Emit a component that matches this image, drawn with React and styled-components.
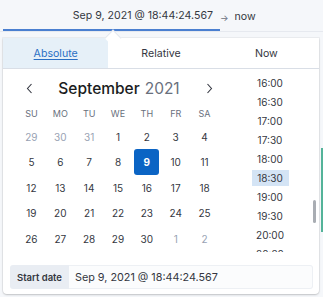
import React, { useLayoutEffect, useRef } from "react";
import styled, { createGlobalStyle } from "styled-components";

const GlobalStyle = createGlobalStyle`
  html, body { margin: 0; padding: 0; }
  body {
    font-family: Inter, "Noto Sans", sans-serif;
    color: #343741;
    background: #f5f7fa;
  }
`;

const Page = styled.div`
  width: 323px;
  height: 297px;
  overflow: hidden;
  background: #f5f7fa;
  display: flex;
  flex-direction: column;
`;

const TopBar = styled.div`
  height: 32px;
  flex: none;
  display: flex;
  padding-left: 3px;
  box-sizing: border-box;
  border-bottom: 1px solid #e6e9ef;
  font-size: 10.6px;
`;

const StartField = styled.div`
  width: 217px;
  display: flex;
  align-items: center;
  justify-content: flex-end;
  padding: 2px 7px 0 0;
  box-sizing: border-box;
  border-bottom: 2px solid #4a7fd0;
`;

const Arrow = styled.span`
  display: flex;
  align-items: center;
  color: #69707d;
  font-size: 9px;
  margin-right: 6px;
  padding-top: 3px;
`;

const EndField = styled.div`
  display: flex;
  align-items: center;
  padding-top: 2px;
`;

const Body = styled.div`
  flex: 1;
  display: flex;
  padding: 6px 0 0 3px;
`;

const Panel = styled.div`
  position: relative;
  width: 316px;
  height: 256px;
  background: #fff;
  border-radius: 0 0 4px 4px;
  box-shadow: 0 1px 2px rgba(0, 0, 0, 0.18), 0 0 0 1px rgba(0, 0, 0, 0.04);
  display: flex;
  flex-direction: column;
`;

const Beak = styled.div`
  position: absolute;
  top: -6px;
  left: 104px;
  width: 11px;
  height: 11px;
  background: #fff;
  transform: rotate(45deg);
  border-top: 1px solid #e3e7ee;
  border-left: 1px solid #e3e7ee;
`;

const Tabs = styled.div`
  display: flex;
  height: 30px;
  border-bottom: 1px solid #d9dee6;
`;

const Tab = styled.div`
  flex: 1;
  display: flex;
  align-items: center;
  justify-content: center;
  font-size: 10.6px;
  background: ${(p) => (p.$active ? "#e6f0f8" : "#fff")};
  color: ${(p) => (p.$active ? "#2a6fc4" : "#343741")};
  text-decoration: ${(p) => (p.$active ? "underline" : "none")};
  text-underline-offset: 2px;
`;

const Content = styled.div`
  display: flex;
  height: 183px;
  overflow: hidden;
`;

const Calendar = styled.div`
  width: 227px;
  padding: 4px 0 0 14px;
  box-sizing: border-box;
`;

const Header = styled.div`
  width: 204px;
  height: 30px;
  display: flex;
  align-items: center;
`;

const NavButton = styled.div`
  width: 24px;
  display: flex;
  justify-content: center;
`;

const Title = styled.div`
  flex: 1;
  text-align: center;
  font-size: 15.5px;
  font-weight: 500;
  color: #1a1c21;
`;

const Year = styled.span`
  font-weight: 400;
  color: #69707d;
  margin-left: 5px;
`;

const Grid = styled.div`
  width: 202px;
  display: grid;
  grid-template-columns: repeat(7, 1fr);
`;

const DayName = styled.div`
  height: 21px;
  display: flex;
  align-items: center;
  justify-content: center;
  font-size: 9px;
  color: #69707d;
`;

const Day = styled.div`
  height: 25.5px;
  display: flex;
  align-items: center;
  justify-content: center;
  font-size: 10px;
  color: ${(p) => (p.$outside ? "#98a2b3" : "#343741")};
`;

const Selected = styled.span`
  width: 25px;
  height: 26px;
  border-radius: 3px;
  background: #0b64c4;
  color: #fff;
  font-weight: 700;
  display: flex;
  align-items: center;
  justify-content: center;
`;

const TimeList = styled.div`
  flex: 1;
  overflow: hidden;
  padding-right: 9px;
`;

const TimeItem = styled.div`
  height: 19px;
  display: flex;
  align-items: center;
  justify-content: center;
  font-size: 10px;
  color: #343741;
`;

const TimeLabel = styled.span`
  width: 37px;
  height: 16px;
  display: flex;
  align-items: center;
  justify-content: center;
  background: ${(p) => (p.$active ? "#d4e4f5" : "transparent")};
`;

const Thumb = styled.div`
  position: absolute;
  left: 310px;
  top: 162px;
  width: 3px;
  height: 23px;
  border-radius: 2px;
  background: #a9adb3;
`;

const Footer = styled.div`
  display: flex;
  padding: 13px 6px 0 7px;
`;

const FieldLabel = styled.div`
  width: 59px;
  height: 24px;
  display: flex;
  align-items: center;
  justify-content: center;
  background: #e9edf3;
  border-radius: 3px 0 0 3px;
  font-size: 9.5px;
  font-weight: 600;
  color: #343741;
`;

const FieldInput = styled.div`
  flex: 1;
  height: 24px;
  box-sizing: border-box;
  display: flex;
  align-items: center;
  padding-left: 6px;
  background: #fbfcfd;
  border: 1px solid #edf0f4;
  border-left: none;
  border-radius: 0 3px 3px 0;
  font-size: 10.8px;
`;

const Strip = styled.div`
  flex: 1;
  display: flex;
  flex-direction: column;
  padding-left: 2px;
`;

const GreenBar = styled.div`
  margin-top: 110px;
  height: 84px;
  background: #54b399;
`;

const weeks = [
  [29, 30, 31, 1, 2, 3, 4],
  [5, 6, 7, 8, 9, 10, 11],
  [12, 13, 14, 15, 16, 17, 18],
  [19, 20, 21, 22, 23, 24, 25],
  [26, 27, 28, 29, 30, 1, 2],
];

const times = [];
for (let h = 0; h < 24; h++) {
  const hh = String(h).padStart(2, "0");
  times.push(`${hh}:00`, `${hh}:30`);
}

const Chevron = ({ dir }) => (
  <svg width="7" height="11" viewBox="0 0 7 11">
    <path
      d={dir === "left" ? "M5.5 1 L1.5 5.5 L5.5 10" : "M1.5 1 L5.5 5.5 L1.5 10"}
      fill="none"
      stroke="#343741"
      strokeWidth="1.1"
    />
  </svg>
);

export default function App() {
  const listRef = useRef(null);

  useLayoutEffect(() => {
    if (listRef.current) listRef.current.scrollTop = 604;
  }, []);

  return (
    <Page>
      <GlobalStyle />
      <TopBar>
        <StartField>Sep 9, 2021 @ 18:44:24.567</StartField>
        <Arrow>→</Arrow>
        <EndField>now</EndField>
      </TopBar>
      <Body>
        <Panel>
          <Beak />
          <Tabs>
            <Tab $active>Absolute</Tab>
            <Tab>Relative</Tab>
            <Tab>Now</Tab>
          </Tabs>
          <Content>
            <Calendar>
              <Header>
                <NavButton>
                  <Chevron dir="left" />
                </NavButton>
                <Title>
                  September<Year>2021</Year>
                </Title>
                <NavButton>
                  <Chevron dir="right" />
                </NavButton>
              </Header>
              <Grid>
                {["SU", "MO", "TU", "WE", "TH", "FR", "SA"].map((d) => (
                  <DayName key={d}>{d}</DayName>
                ))}
                {weeks.map((week, wi) =>
                  week.map((d, di) => {
                    const outside = (wi === 0 && d > 20) || (wi === 4 && d < 10);
                    return (
                      <Day key={`${wi}-${di}`} $outside={outside}>
                        {!outside && d === 9 ? <Selected>{d}</Selected> : d}
                      </Day>
                    );
                  })
                )}
              </Grid>
            </Calendar>
            <TimeList ref={listRef}>
              {times.map((t) => (
                <TimeItem key={t}>
                  <TimeLabel $active={t === "18:30"}>{t}</TimeLabel>
                </TimeItem>
              ))}
            </TimeList>
          </Content>
          <Thumb />
          <Footer>
            <FieldLabel>Start date</FieldLabel>
            <FieldInput>Sep 9, 2021 @ 18:44:24.567</FieldInput>
          </Footer>
        </Panel>
        <Strip>
          <GreenBar />
        </Strip>
      </Body>
    </Page>
  );
}
